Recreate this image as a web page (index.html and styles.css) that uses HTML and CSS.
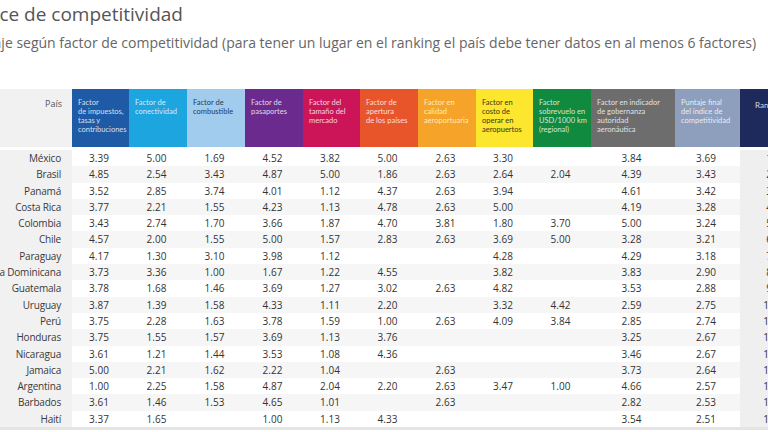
FILE: index.html
```html
<!DOCTYPE html>
<html lang="es">
<head>
<meta charset="utf-8">
<title>Índice de competitividad</title>
<link rel="stylesheet" href="styles.css">
</head>
<body>
<div class="page">
  <h1 class="title">Índice de competitividad</h1>
  <p class="subtitle">Puntaje según factor de competitividad (para tener un lugar en el ranking el país debe tener datos en al menos 6 factores)</p>
  <div class="table">
    <div class="row head">
      <div class="cell country-h"><span>País</span></div>
      <div class="cell h c1">Factor<br>de impuestos,<br>tasas y<br>contribuciones</div>
      <div class="cell h c2">Factor de<br>conectividad</div>
      <div class="cell h c3">Factor de<br>combustible</div>
      <div class="cell h c4">Factor de<br>pasaportes</div>
      <div class="cell h c5">Factor del<br>tamaño del<br>mercado</div>
      <div class="cell h c6">Factor de<br>apertura<br>de los países</div>
      <div class="cell h c7">Factor en<br>calidad<br>aeroportuaria</div>
      <div class="cell h c8">Factor en<br>costo de<br>operar en<br>aeropuertos</div>
      <div class="cell h c9">Factor<br>sobrevuelo en<br>USD/1000 km<br>(regional)</div>
      <div class="cell h c10">Factor en indicador<br>de gobernanza<br>autoridad<br>aeronáutica</div>
      <div class="cell h c11">Puntaje final<br>del índice de<br>competitividad</div>
      <div class="cell h c12 rank-h">Ranking</div>
    </div>
    <div class="body" id="tbody">
      <div class="row"><div class="cell country"><span>México</span></div><div class="cell">3.39</div><div class="cell">5.00</div><div class="cell">1.69</div><div class="cell">4.52</div><div class="cell">3.82</div><div class="cell">5.00</div><div class="cell">2.63</div><div class="cell">3.30</div><div class="cell"></div><div class="cell">3.84</div><div class="cell">3.69</div><div class="cell rank">1</div></div>
      <div class="row"><div class="cell country"><span>Brasil</span></div><div class="cell">4.85</div><div class="cell">2.54</div><div class="cell">3.43</div><div class="cell">4.87</div><div class="cell">5.00</div><div class="cell">1.86</div><div class="cell">2.63</div><div class="cell">2.64</div><div class="cell">2.04</div><div class="cell">4.39</div><div class="cell">3.43</div><div class="cell rank">2</div></div>
      <div class="row"><div class="cell country"><span>Panamá</span></div><div class="cell">3.52</div><div class="cell">2.85</div><div class="cell">3.74</div><div class="cell">4.01</div><div class="cell">1.12</div><div class="cell">4.37</div><div class="cell">2.63</div><div class="cell">3.94</div><div class="cell"></div><div class="cell">4.61</div><div class="cell">3.42</div><div class="cell rank">3</div></div>
      <div class="row"><div class="cell country"><span>Costa Rica</span></div><div class="cell">3.77</div><div class="cell">2.21</div><div class="cell">1.55</div><div class="cell">4.23</div><div class="cell">1.13</div><div class="cell">4.78</div><div class="cell">2.63</div><div class="cell">5.00</div><div class="cell"></div><div class="cell">4.19</div><div class="cell">3.28</div><div class="cell rank">4</div></div>
      <div class="row"><div class="cell country"><span>Colombia</span></div><div class="cell">3.43</div><div class="cell">2.74</div><div class="cell">1.70</div><div class="cell">3.66</div><div class="cell">1.87</div><div class="cell">4.70</div><div class="cell">3.81</div><div class="cell">1.80</div><div class="cell">3.70</div><div class="cell">5.00</div><div class="cell">3.24</div><div class="cell rank">5</div></div>
      <div class="row"><div class="cell country"><span>Chile</span></div><div class="cell">4.57</div><div class="cell">2.00</div><div class="cell">1.55</div><div class="cell">5.00</div><div class="cell">1.57</div><div class="cell">2.83</div><div class="cell">2.63</div><div class="cell">3.69</div><div class="cell">5.00</div><div class="cell">3.28</div><div class="cell">3.21</div><div class="cell rank">6</div></div>
      <div class="row"><div class="cell country"><span>Paraguay</span></div><div class="cell">4.17</div><div class="cell">1.30</div><div class="cell">3.10</div><div class="cell">3.98</div><div class="cell">1.12</div><div class="cell"></div><div class="cell"></div><div class="cell">4.28</div><div class="cell"></div><div class="cell">4.29</div><div class="cell">3.18</div><div class="cell rank">7</div></div>
      <div class="row"><div class="cell country"><span>República Dominicana</span></div><div class="cell">3.73</div><div class="cell">3.36</div><div class="cell">1.00</div><div class="cell">1.67</div><div class="cell">1.22</div><div class="cell">4.55</div><div class="cell"></div><div class="cell">3.82</div><div class="cell"></div><div class="cell">3.83</div><div class="cell">2.90</div><div class="cell rank">8</div></div>
      <div class="row"><div class="cell country"><span>Guatemala</span></div><div class="cell">3.78</div><div class="cell">1.68</div><div class="cell">1.46</div><div class="cell">3.69</div><div class="cell">1.27</div><div class="cell">3.02</div><div class="cell">2.63</div><div class="cell">4.82</div><div class="cell"></div><div class="cell">3.53</div><div class="cell">2.88</div><div class="cell rank">9</div></div>
      <div class="row"><div class="cell country"><span>Uruguay</span></div><div class="cell">3.87</div><div class="cell">1.39</div><div class="cell">1.58</div><div class="cell">4.33</div><div class="cell">1.11</div><div class="cell">2.20</div><div class="cell"></div><div class="cell">3.32</div><div class="cell">4.42</div><div class="cell">2.59</div><div class="cell">2.75</div><div class="cell rank">10</div></div>
      <div class="row"><div class="cell country"><span>Perú</span></div><div class="cell">3.75</div><div class="cell">2.28</div><div class="cell">1.63</div><div class="cell">3.78</div><div class="cell">1.59</div><div class="cell">1.00</div><div class="cell">2.63</div><div class="cell">4.09</div><div class="cell">3.84</div><div class="cell">2.85</div><div class="cell">2.74</div><div class="cell rank">11</div></div>
      <div class="row"><div class="cell country"><span>Honduras</span></div><div class="cell">3.75</div><div class="cell">1.55</div><div class="cell">1.57</div><div class="cell">3.69</div><div class="cell">1.13</div><div class="cell">3.76</div><div class="cell"></div><div class="cell"></div><div class="cell"></div><div class="cell">3.25</div><div class="cell">2.67</div><div class="cell rank">12</div></div>
      <div class="row"><div class="cell country"><span>Nicaragua</span></div><div class="cell">3.61</div><div class="cell">1.21</div><div class="cell">1.44</div><div class="cell">3.53</div><div class="cell">1.08</div><div class="cell">4.36</div><div class="cell"></div><div class="cell"></div><div class="cell"></div><div class="cell">3.46</div><div class="cell">2.67</div><div class="cell rank">13</div></div>
      <div class="row"><div class="cell country"><span>Jamaica</span></div><div class="cell">5.00</div><div class="cell">2.21</div><div class="cell">1.62</div><div class="cell">2.22</div><div class="cell">1.04</div><div class="cell"></div><div class="cell">2.63</div><div class="cell"></div><div class="cell"></div><div class="cell">3.73</div><div class="cell">2.64</div><div class="cell rank">14</div></div>
      <div class="row"><div class="cell country"><span>Argentina</span></div><div class="cell">1.00</div><div class="cell">2.25</div><div class="cell">1.58</div><div class="cell">4.87</div><div class="cell">2.04</div><div class="cell">2.20</div><div class="cell">2.63</div><div class="cell">3.47</div><div class="cell">1.00</div><div class="cell">4.66</div><div class="cell">2.57</div><div class="cell rank">15</div></div>
      <div class="row"><div class="cell country"><span>Barbados</span></div><div class="cell">3.61</div><div class="cell">1.46</div><div class="cell">1.53</div><div class="cell">4.65</div><div class="cell">1.01</div><div class="cell"></div><div class="cell">2.63</div><div class="cell"></div><div class="cell"></div><div class="cell">2.82</div><div class="cell">2.53</div><div class="cell rank">16</div></div>
      <div class="row"><div class="cell country"><span>Haití</span></div><div class="cell">3.37</div><div class="cell">1.65</div><div class="cell"></div><div class="cell">1.00</div><div class="cell">1.13</div><div class="cell">4.33</div><div class="cell"></div><div class="cell"></div><div class="cell"></div><div class="cell">3.54</div><div class="cell">2.51</div><div class="cell rank">17</div></div>
    </div>
  </div>
</div>
</body>
</html>
```
FILE: styles.css
```css
html, body {
  margin: 0;
  padding: 0;
  background: #ffffff;
}
body {
  width: 768px;
  height: 432px;
  overflow: hidden;
  font-family: "Open Sans", "Noto Sans", sans-serif;
  color: #333;
}
.page {
  width: 900px;
}
.title {
  margin: 2px 0 0 -34px;
  font-size: 19px;
  line-height: 24px;
  font-weight: 400;
  color: #555;
  white-space: nowrap;
}
.subtitle {
  margin: 8px 0 0 -37px;
  font-size: 14px;
  line-height: 18px;
  color: #666;
  white-space: nowrap;
}
.table {
  margin-top: 37px;
  width: 798px;
  border-bottom: 3px solid #e4e4e4;
}
.row {
  display: grid;
  grid-template-columns: 72px 57px 58px 58px 58px 57px 58px 58px 57px 58px 84px 65px 58px;
}
.head {
  height: 58px;
  margin-bottom: 3px;
}
.cell {
  font-size: 10px;
  line-height: 16.3px;
  height: 16.3px;
  text-align: center;
  padding-right: 3px;
  white-space: nowrap;
}
.body .row:nth-child(even) .cell {
  background: #f6f6f6;
}
.body .cell.country,
.body .row:nth-child(even) .cell.country {
  background: #f1f1f1;
  display: flex;
  justify-content: flex-end;
  padding-right: 11px;
  color: #3a3a3a;
  letter-spacing: -0.2px;
}
.body .cell.rank,
.body .row:nth-child(even) .cell.rank {
  background: #efefef;
  padding-right: 0;
}
.head .cell {
  height: 58px;
  box-sizing: border-box;
}
.country-h {
  background: #f1f1f1;
  display: flex;
  justify-content: flex-end;
  padding: 10px 10px 0 0;
  color: #555;
  font-size: 9px;
  line-height: 10px !important;
}
.h {
  text-align: left;
  font-family: "Lato", "Open Sans", sans-serif;
  font-size: 7.5px;
  line-height: 9px !important;
  padding: 9px 2px 0 6px;
  color: rgba(255, 255, 255, 0.82);
  white-space: nowrap;
}
.c1 { background: #1f5aa6; }
.c2 { background: #1ca5df; }
.c3 { background: #a2cced; color: #1d3a5e; }
.c4 { background: #6b2b8e; }
.c5 { background: #cc1558; }
.c6 { background: #e8552b; }
.c7 { background: #f6a32a; color: rgba(255, 246, 210, 0.9); }
.c8 { background: #fce72e; color: #3b3614; }
.c9 { background: #0f8a3f; }
.c10 { background: #6d6d6d; }
.c11 { background: #8e9fbd; }
.c12 { background: #1f2a5c; }
.rank-h {
  text-align: center;
  padding: 12px 0 0 0;
  font-size: 8px;
}
```
